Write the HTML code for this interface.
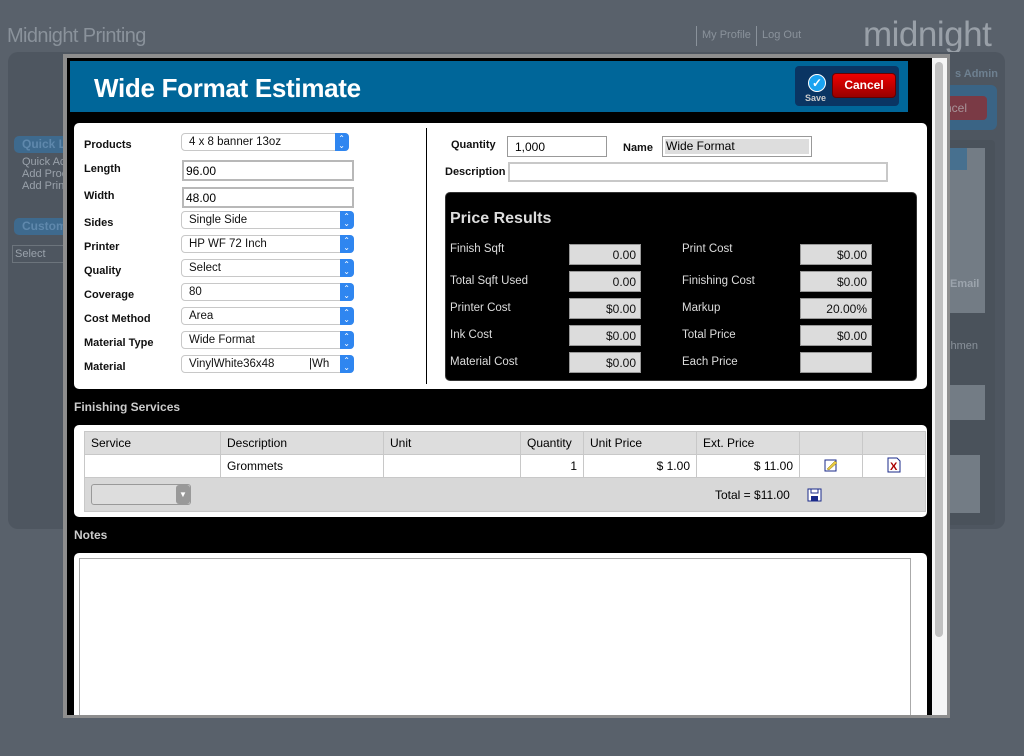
<!DOCTYPE html>
<html><head><style>
*{box-sizing:border-box;margin:0;padding:0}
body{width:1024px;height:756px;overflow:hidden;background:#59616b;font-family:"Liberation Sans",sans-serif;position:relative}
.a{position:absolute}
.lbl{position:absolute;font-size:11px;font-weight:bold;color:#111}
.sel{position:absolute;height:18px;border:1px solid #c8c8c8;border-radius:4px;background:#fff;font-size:11.5px;padding:2px 0 0 7px;color:#111}
.sel:after{content:"";position:absolute;right:-1px;top:-1px;width:14px;height:18px;background:#2f86f0;border-radius:0 4px 4px 0}
.sel i{position:absolute;right:3px;top:1px;color:#fff;font-size:8px;line-height:7px;z-index:2;font-style:normal}
.inp{position:absolute;height:21px;border:2px solid #b8b8b8;background:#fff;font-size:12px;padding:2px 0 0 2px}
.pl{position:absolute;color:#ddd;font-size:11.5px}
.pv{position:absolute;width:72px;height:21px;background:#dcdcdc;border:1px solid #999;font-size:12px;text-align:right;padding:3px 4px 0 0;color:#111}
table{border-collapse:collapse;font-size:12px}
td{border:1px solid #c8c8c8;padding:0 6px;height:23px}
</style></head><body>
<div class="a" style="left:7px;top:25px;font-size:20px;color:#8a929b;letter-spacing:-0.6px">Midnight Printing</div>
<div class="a" style="left:696px;top:26px;height:20px;border-left:1px solid #8a929b"></div>
<div class="a" style="left:702px;top:29px;font-size:11px;color:#8a929b">My Profile</div>
<div class="a" style="left:756px;top:26px;height:20px;border-left:1px solid #8a929b"></div>
<div class="a" style="left:762px;top:29px;font-size:11px;color:#8a929b">Log Out</div>
<div class="a" style="left:863px;top:15px;font-size:35px;color:#99a0a8;letter-spacing:-0.5px">midnight</div>
<div class="a" style="left:8px;top:52px;width:997px;height:477px;background:#4e5660;border-radius:10px"></div>
<div class="a" style="left:14px;top:136px;width:60px;height:17px;background:#3e6a8e;border-radius:5px;color:#5f88ac;font-weight:bold;font-size:12px;padding:1px 0 0 8px">Quick L</div>
<div class="a" style="left:22px;top:156px;font-size:11px;color:#9aa2ab;line-height:12px">Quick Ac<br>Add Proc<br>Add Prin</div>
<div class="a" style="left:14px;top:218px;width:60px;height:17px;background:#3e6a8e;border-radius:5px;color:#5f88ac;font-weight:bold;font-size:12px;padding:1px 0 0 8px">Custom</div>
<div class="a" style="left:12px;top:245px;width:60px;height:18px;border:1px solid #6c747c;color:#9aa2ab;font-size:11px;padding:2px">Select</div>
<div class="a" style="left:955px;top:68px;font-size:11px;font-weight:bold;color:#6e8090">s Admin</div>
<div class="a" style="left:945px;top:85px;width:52px;height:45px;background:#3a6485;border-radius:6px"></div>
<div class="a" style="left:945px;top:96px;width:42px;height:24px;background:#7a3a45;border-radius:4px;color:#a8959a;font-size:12px;padding:5px 0 0 0">ncel</div>
<div class="a" style="left:945px;top:140px;width:50px;height:385px;background:#4a525b;border-radius:4px"></div>
<div class="a" style="left:945px;top:148px;width:40px;height:165px;background:#737c85"></div>
<div class="a" style="left:945px;top:148px;width:22px;height:22px;background:#47708f"></div>
<div class="a" style="left:945px;top:278px;width:40px;height:20px;color:#9ca4ad;font-size:11px;font-weight:bold;padding-left:5px">Email</div>
<div class="a" style="left:945px;top:340px;font-size:11px;color:#8a929b">chmen</div>
<div class="a" style="left:945px;top:385px;width:40px;height:35px;background:#737c85"></div>
<div class="a" style="left:945px;top:455px;width:35px;height:58px;background:#737c85"></div>

<!-- modal -->
<div class="a" style="left:63px;top:54px;width:887px;height:664px;background:#8e8e8e"></div>
<div class="a" style="left:67px;top:58px;width:866px;height:657px;background:#000"></div>
<div class="a" style="left:932px;top:58px;width:15px;height:657px;background:#f5f5f5"></div>
<div class="a" style="left:935px;top:62px;width:8px;height:575px;background:#c0c0c0;border-radius:4px"></div>
<div class="a" style="left:70px;top:61px;width:838px;height:51px;background:#006699"></div>
<div class="a" style="left:94px;top:73px;font-size:26px;font-weight:bold;color:#fff;letter-spacing:-0.3px">Wide Format Estimate</div>
<div class="a" style="left:795px;top:66px;width:104px;height:40px;background:#0a3563;border-radius:4px"></div>
<div class="a" style="left:808px;top:74px;width:18px;height:18px;border-radius:50%;background:#1aa3f0;border:1px solid #fff;color:#fff;font-size:12px;text-align:center;line-height:16px;font-weight:bold">✓</div>
<div class="a" style="left:805px;top:93px;font-size:9px;font-weight:bold;color:#ccc">Save</div>
<div class="a" style="left:832px;top:73px;width:64px;height:25px;background:linear-gradient(#e00,#900);border:1px solid #600;border-radius:4px;color:#fff;font-size:12px;font-weight:bold;text-align:center;line-height:23px">Cancel</div>

<div class="a" style="left:74px;top:123px;width:853px;height:266px;background:#fff;border-radius:5px"></div>
<div class="a" style="left:426px;top:128px;height:256px;border-left:1px solid #000"></div>
<div class="lbl" style="left:84px;top:139px">Products</div>
<div class="sel" style="left:181px;top:133px;width:168px">4 x 8 banner 13oz<i>⌃<br>⌄</i></div>
<div class="lbl" style="left:84px;top:163px">Length</div>
<div class="inp" style="left:182px;top:160px;width:172px">96.00</div>
<div class="lbl" style="left:84px;top:190px">Width</div>
<div class="inp" style="left:182px;top:187px;width:172px">48.00</div>
<div class="lbl" style="left:84px;top:217px">Sides</div>
<div class="sel" style="left:181px;top:211px;width:173px">Single Side<i>⌃<br>⌄</i></div>
<div class="lbl" style="left:84px;top:241px">Printer</div>
<div class="sel" style="left:181px;top:235px;width:173px">HP WF 72 Inch<i>⌃<br>⌄</i></div>
<div class="lbl" style="left:84px;top:265px">Quality</div>
<div class="sel" style="left:181px;top:259px;width:173px">Select<i>⌃<br>⌄</i></div>
<div class="lbl" style="left:84px;top:289px">Coverage</div>
<div class="sel" style="left:181px;top:283px;width:173px">80<i>⌃<br>⌄</i></div>
<div class="lbl" style="left:84px;top:313px">Cost Method</div>
<div class="sel" style="left:181px;top:307px;width:173px">Area<i>⌃<br>⌄</i></div>
<div class="lbl" style="left:84px;top:337px">Material Type</div>
<div class="sel" style="left:181px;top:331px;width:173px">Wide Format<i>⌃<br>⌄</i></div>
<div class="lbl" style="left:84px;top:361px">Material</div>
<div class="sel" style="left:181px;top:355px;width:173px">VinylWhite36x48<span style="position:absolute;left:127px">|Wh</span><i>⌃<br>⌄</i></div>

<div class="lbl" style="left:451px;top:139px">Quantity</div>
<div class="a" style="left:507px;top:136px;width:100px;height:21px;border:1px solid #999;font-size:12px;padding:3px 0 0 7px">1,000</div>
<div class="lbl" style="left:623px;top:142px">Name</div>
<div class="a" style="left:662px;top:136px;width:150px;height:21px;border:1px solid #999;background:#fff;padding:2px"><div style="background:#ddd;height:15px;font-size:12px;padding-left:1px">Wide Format</div></div>
<div class="lbl" style="left:445px;top:166px">Description</div>
<div class="a" style="left:508px;top:162px;width:380px;height:20px;border:2px solid #c8c8c8"></div>

<div class="a" style="left:445px;top:192px;width:472px;height:189px;background:#000;border-radius:5px;border:1px solid #333"></div>
<div class="a" style="left:450px;top:210px;font-size:16px;font-weight:bold;color:#ddd">Price Results</div>
<div class="pl" style="left:450px;top:243px">Finish Sqft</div><div class="pv" style="left:569px;top:244px">0.00</div>
<div class="pl" style="left:450px;top:275px">Total Sqft Used</div><div class="pv" style="left:569px;top:271px">0.00</div>
<div class="pl" style="left:450px;top:302px">Printer Cost</div><div class="pv" style="left:569px;top:298px">$0.00</div>
<div class="pl" style="left:450px;top:329px">Ink Cost</div><div class="pv" style="left:569px;top:325px">$0.00</div>
<div class="pl" style="left:450px;top:356px">Material Cost</div><div class="pv" style="left:569px;top:352px">$0.00</div>
<div class="pl" style="left:682px;top:243px">Print Cost</div><div class="pv" style="left:800px;top:244px">$0.00</div>
<div class="pl" style="left:682px;top:275px">Finishing Cost</div><div class="pv" style="left:800px;top:271px">$0.00</div>
<div class="pl" style="left:682px;top:302px">Markup</div><div class="pv" style="left:800px;top:298px">20.00%</div>
<div class="pl" style="left:682px;top:329px">Total Price</div><div class="pv" style="left:800px;top:325px">$0.00</div>
<div class="pl" style="left:682px;top:356px">Each Price</div><div class="pv" style="left:800px;top:352px"></div>

<div class="a" style="left:74px;top:400px;font-size:12px;font-weight:bold;color:#ccc">Finishing Services</div>
<div class="a" style="left:74px;top:425px;width:853px;height:92px;background:#fff;border-radius:5px"></div>
<table class="a" style="left:84px;top:431px;width:842px">
<tr style="background:#ddd"><td style="width:136px">Service</td><td style="width:163px">Description</td><td style="width:137px">Unit</td><td style="width:63px">Quantity</td><td style="width:113px">Unit Price</td><td style="width:103px">Ext. Price</td><td style="width:63px"></td><td></td></tr>
<tr><td></td><td>Grommets</td><td></td><td style="text-align:right">1</td><td style="text-align:right">$ 1.00</td><td style="text-align:right">$ 11.00</td><td style="text-align:center"><svg width="14" height="14"><rect x="1" y="2" width="11" height="11" fill="#fff" stroke="#1a2a8a"/><path d="M3 11 L11 3 L13 5 L5 12Z" fill="#e8c840" stroke="#8a7a20" stroke-width=".5"/></svg></td><td style="text-align:center"><svg width="14" height="16"><path d="M1 1H10L13 4V15H1Z" fill="#fff" stroke="#1a2a8a"/><text x="3" y="13" font-size="11" font-weight="bold" fill="#a00" font-family="Liberation Sans">X</text></svg></td></tr>
<tr style="background:#d8d8d8"><td colspan="8" style="height:34px;position:relative"><div style="position:absolute;left:6px;top:6px;width:100px;height:21px;border:1px solid #999;border-radius:3px;background:#ddd"><div style="position:absolute;right:0;top:0;width:14px;height:19px;background:#999;border-radius:3px;color:#fff;font-size:8px;text-align:center;line-height:19px">▼</div></div><span style="position:absolute;left:630px;top:10px">Total = $11.00</span><svg class="a" style="left:722px;top:10px" width="15" height="14"><rect x="1" y="1" width="13" height="12" fill="#fff" stroke="#1a2a8a"/><rect x="4" y="1" width="7" height="4" fill="none" stroke="#1a2a8a"/><rect x="4" y="8" width="7" height="5" fill="#1a2a8a"/></svg></td></tr>
</table>

<div class="a" style="left:74px;top:528px;font-size:12px;font-weight:bold;color:#ccc">Notes</div>
<div class="a" style="left:74px;top:553px;width:853px;height:162px;background:#fff;border-radius:5px 5px 0 0"></div>
<div class="a" style="left:79px;top:558px;width:832px;height:157px;border:1px solid #aaa;border-bottom:none"></div>
</body></html>
